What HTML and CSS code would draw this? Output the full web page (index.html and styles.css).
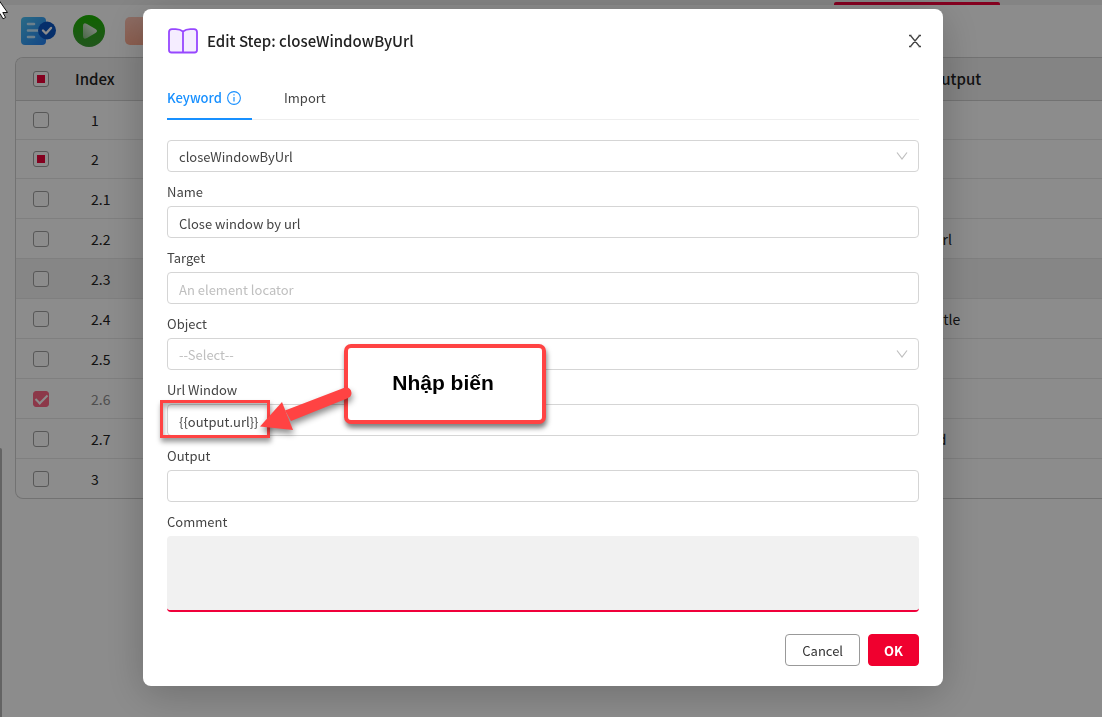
FILE: index.html
```html
<!DOCTYPE html>
<html lang="en">
<head>
<meta charset="utf-8">
<title>Edit Step</title>
<link rel="stylesheet" href="styles.css">
</head>
<body>
<div class="app">
  <div class="tabstrip"><span class="tabstrip-active"></span></div>
  <main class="page">
    <div class="toolbar">
      <button class="tool" type="button" aria-label="Test cases">
        <svg width="36" height="30" viewBox="0 0 36 30"><defs><linearGradient id="doc" x1="0" y1="0" x2="1" y2="1"><stop offset="0" stop-color="#4cc3f5"/><stop offset="1" stop-color="#2380f5"/></linearGradient></defs><rect x="1" y="1" width="25" height="28" rx="4" fill="url(#doc)"/><path d="M8 8h6M8 14.500h10M8 21h6" stroke="#c5eaff" stroke-width="2.600" stroke-linecap="round"/><circle cx="27" cy="14.500" r="9" fill="#0b56c4"/><path d="M23 14.500l3 3 5-5.500" fill="none" stroke="#fff" stroke-width="2.400" stroke-linecap="round" stroke-linejoin="round"/></svg>
      </button>
      <button class="tool" type="button" aria-label="Run">
        <svg width="32" height="32" viewBox="0 0 32 32"><defs><linearGradient id="run" x1="0" y1="0" x2="0" y2="1"><stop offset="0" stop-color="#1cb400"/><stop offset="1" stop-color="#3d9c35"/></linearGradient><linearGradient id="play" x1="0" y1="1" x2="1" y2="0"><stop offset="0" stop-color="#86bd80"/><stop offset="1" stop-color="#fff"/></linearGradient></defs><circle cx="16" cy="16" r="16" fill="url(#run)"/><path d="M10 11q0-4 4-2l8.500 5q3 2 0 4L14 23q-4 2-4-2z" fill="url(#play)"/></svg>
      </button>
      <button class="tool" type="button" aria-label="Stop">
        <svg width="28" height="28" viewBox="0 0 28 28"><defs><linearGradient id="stop" x1="0" y1="0" x2="0" y2="1"><stop offset="0" stop-color="#ffc4b4"/><stop offset="1" stop-color="#ffac91"/></linearGradient></defs><rect width="28" height="28" rx="5" fill="url(#stop)"/></svg>
      </button>
    </div>
    <div class="table-wrap">
      <table class="steps">
        <thead><tr><th class="col-check"><input type="checkbox" class="box partial" aria-label="Select all"></th><th class="col-index">Index</th><th></th><th class="col-out">Output</th></tr></thead>
        <tbody>
          <tr><td class="col-check"><input type="checkbox" class="box" aria-label="Step 1"></td><td>1</td><td></td><td></td></tr>
          <tr><td class="col-check"><input type="checkbox" class="box partial" aria-label="Step 2"></td><td>2</td><td></td><td></td></tr>
          <tr class="sub"><td class="col-check"><input type="checkbox" class="box" aria-label="Step 2.1"></td><td>2.1</td><td></td><td></td></tr>
          <tr class="sub"><td class="col-check"><input type="checkbox" class="box" aria-label="Step 2.2"></td><td>2.2</td><td></td><td>url</td></tr>
          <tr class="sub hover"><td class="col-check"><input type="checkbox" class="box" aria-label="Step 2.3"></td><td>2.3</td><td></td><td></td></tr>
          <tr class="sub"><td class="col-check"><input type="checkbox" class="box" aria-label="Step 2.4"></td><td>2.4</td><td></td><td>title</td></tr>
          <tr class="sub"><td class="col-check"><input type="checkbox" class="box" aria-label="Step 2.5"></td><td>2.5</td><td></td><td></td></tr>
          <tr class="sub faded"><td class="col-check"><input type="checkbox" class="box" checked aria-label="Step 2.6"></td><td>2.6</td><td></td><td></td></tr>
          <tr class="sub"><td class="col-check"><input type="checkbox" class="box" aria-label="Step 2.7"></td><td>2.7</td><td></td><td>id</td></tr>
          <tr><td class="col-check"><input type="checkbox" class="box" aria-label="Step 3"></td><td>3</td><td></td><td></td></tr>
        </tbody>
      </table>
    </div>
  </main>
  <span class="scroll-thumb"></span>
</div>

<div class="overlay">
  <form class="modal" role="dialog" aria-labelledby="modal-title">
    <header class="modal-head">
      <svg width="32" height="28" viewBox="0 0 32 28"><path d="M16 4.500Q13 2 8 2.200H5Q2 2.200 2 5v18q0 2.500 2.500 2.500h23Q30 25.500 30 23V5q0-2.800-3-2.800h-3Q19 2 16 4.500zM16 4.500v21" fill="#f5edff" stroke="#9747ff" stroke-width="1.800" stroke-linejoin="round"/></svg>
      <h1 id="modal-title" class="modal-title">Edit Step: closeWindowByUrl</h1>
      <button class="close" type="button" aria-label="Close"><svg width="14" height="14" viewBox="0 0 14 14"><path d="M2.500 1.500l9 11M11.500 1.500l-9 11M1 1.500h2.500M10.500 1.500H13M1 12.500h2.500M10.500 12.500H13" fill="none" stroke="#444" stroke-width="1.300"/></svg></button>
    </header>
    <nav class="tabs">
      <button class="tab active" type="button">Keyword <svg width="14" height="14" viewBox="0 0 14 14" fill="none" stroke="#1890ff"><circle cx="7" cy="7" r="6.400" stroke-width="1.100"/><path d="M7 6v4.500M7 3.300v1.300" stroke-width="1.200"/></svg></button>
      <button class="tab" type="button">Import</button>
    </nav>
    <div class="select-wrap">
      <select class="field" aria-label="Keyword"><option>closeWindowByUrl</option></select>
      <svg class="chevron" width="12" height="10" viewBox="0 0 12 10"><path d="M1 1.500l5 6.500 5-6.500" fill="none" stroke="#bfbfbf" stroke-width="1.200"/></svg>
    </div>
    <label class="label" for="name">Name</label>
    <input class="field" id="name" type="text" value="Close window by url">
    <label class="label" for="target">Target</label>
    <input class="field" id="target" type="text" placeholder="An element locator">
    <label class="label" for="object">Object</label>
    <div class="select-wrap">
      <select class="field empty" id="object"><option>--Select--</option></select>
      <svg class="chevron" width="12" height="10" viewBox="0 0 12 10"><path d="M1 1.500l5 6.500 5-6.500" fill="none" stroke="#bfbfbf" stroke-width="1.200"/></svg>
    </div>
    <label class="label" for="url">Url Window</label>
    <input class="field" id="url" type="text" value="{{output.url}}">
    <label class="label" for="output">Output</label>
    <input class="field" id="output" type="text">
    <label class="label" for="comment">Comment</label>
    <textarea class="comment" id="comment"></textarea>
    <footer class="actions">
      <button class="btn" type="button">Cancel</button>
      <button class="btn primary" type="submit">OK</button>
    </footer>
    <div class="mark"></div>
    <div class="callout">Nhập biến</div>
    <svg class="arrow" width="100" height="60" viewBox="0 0 100 60"><path d="M88 8.500Q94 8 94.500 14Q94.500 18 90 19.500L34 42L28 31.500z" fill="#ff4343"/><path d="M3 47.500L25 23L36 51z" fill="#ff4343"/></svg>
  </form>
</div>

<svg class="cursor" width="10" height="20" viewBox="0 0 10 20"><path d="M-4-4L7.500 12.500H2.800L5.600 17.500L3 18.800L0 13.500L-4 17z" fill="#fff" stroke="#111"/></svg>
</body>
</html>
```
FILE: styles.css
```css
* { box-sizing: border-box; }
body {
  margin: 0;
  background: #fff;
  color: #222;
  font: 14px/22px "Noto Sans CJK JP", "Noto Sans", sans-serif;
  overflow: hidden;
}
button, input, select, textarea { font: inherit; color: inherit; margin: 0; }
.app { position: relative; min-height: 100vh; }
.tabstrip { display: flex; justify-content: flex-end; align-items: flex-end; height: 5px; padding-right: 102px; background: #f0f0f0; }
.tabstrip-active { width: 166px; height: 3px; background: #f0003a; border-radius: 2px 2px 0 0; }
.page { padding: 10px 0 0 15px; }
.toolbar { display: flex; align-items: center; gap: 17px; height: 32px; padding-left: 5px; margin-bottom: 10px; }
.tool { display: flex; padding: 0; border: 0; background: none; }
.tool:last-child { margin-left: 3px; }
.table-wrap { border: 1px solid #d0d0d0; border-right: 0; border-radius: 8px 0 0 8px; overflow: hidden; }
.steps { width: 100%; border-collapse: separate; border-spacing: 0; table-layout: fixed; }
.steps th { height: 43px; padding: 0 0 0 9px; background: #f0f0f0; border-bottom: 1px solid #d0d0d0; text-align: left; font-size: 15px; font-weight: 500; }
.steps td { height: 39px; padding: 0 0 0 25px; border-bottom: 1px solid #e8e8e8; }
.steps .sub td { height: 40px; }
.steps tr:last-child td { border-bottom: 0; }
.steps .hover td { background: #f5f5f5; }
.steps .faded td { color: #909090; }
.steps .col-check { width: 50px; padding: 0; text-align: center; }
.steps .col-index { width: 120px; }
.steps .col-out { width: 172px; padding-left: 0; }
.steps td:last-child { padding-left: 4px; }
.box { appearance: none; display: grid; place-items: center; width: 16px; height: 16px; margin: 0 auto; border: 1px solid #a0a0a0; border-radius: 3px; background: #fff; }
.box.partial::after { content: ""; width: 8px; height: 8px; background: #f0003a; }
.box:checked { background: #ff6685; border-color: #ff6685; }
.box:checked::after { content: ""; width: 5px; height: 10px; border: solid #fff; border-width: 0 2px 2px 0; transform: translateY(-1px) rotate(45deg); }
.scroll-thumb { position: absolute; left: 0; top: 448px; bottom: 0; width: 2px; background: #b5b5b5; border-radius: 0 2px 0 0; }

.overlay { position: fixed; inset: 0; display: flex; justify-content: center; align-items: flex-start; padding: 9px 16px 0 0; background: rgba(0, 0, 0, .45); }
.modal { position: relative; width: 100%; max-width: 800px; padding: 17px 24px 20px; background: #fff; border-radius: 8px; box-shadow: 0 8px 40px rgba(0, 0, 0, .22); color: #444; font-size: 13px; }
.modal-head { display: flex; align-items: center; gap: 8px; height: 30px; margin-bottom: 22px; }
.modal-title { flex: 1; margin: 0; color: #222; font-size: 15px; line-height: 24px; font-weight: 500; }
.close { display: flex; padding: 0; margin-right: -3px; border: 0; background: none; }
.tabs { display: flex; gap: 32px; height: 42px; margin-bottom: 20px; box-shadow: inset 0 -1px #eee; }
.tab { display: flex; align-items: center; gap: 5px; padding: 0; border: 0; border-bottom: 2px solid transparent; background: none; }
.tab.active { padding-right: 11px; color: #1890ff; border-color: #1890ff; font-weight: 500; }
.label { display: block; height: 34px; line-height: 40px; }
.field { display: block; width: 100%; height: 32px; padding: 2px 11px 0; border: 1px solid #d5d5d5; border-radius: 4px; background: #fff; appearance: none; outline: 0; }
.field::placeholder, .field.empty { color: #bfbfbf; opacity: 1; }
.select-wrap { display: grid; align-items: center; }
.select-wrap > * { grid-area: 1 / 1; }
.chevron { justify-self: end; margin-right: 11px; pointer-events: none; }
.comment { display: block; width: 100%; height: 76px; border: 0; border-bottom: 2px solid #f0003a; border-radius: 4px; background: #f1f1f1; resize: none; outline: 0; }
.actions { display: flex; justify-content: flex-end; gap: 8px; margin-top: 22px; }
.btn { height: 32px; padding: 1px 16px 0; border: 1px solid #999; border-radius: 4px; background: #fff; color: #333; }
.btn.primary { padding: 1px 15px 0; border-color: #f0002f; background: #f0002f; color: #fff; font-weight: 700; }
.mark { position: absolute; left: 17px; top: 391px; width: 110px; height: 38px; border: 3px solid #ff4343; box-shadow: 1px 4px 5px rgba(0, 0, 0, .4), inset 1px 4px 5px rgba(0, 0, 0, .3); }
.callout { position: absolute; left: 201px; top: 335px; display: grid; place-items: center; width: 202px; height: 80px; padding: 0 4px 2px 0; border: 4px solid #ff4343; border-radius: 7px; background: #fff; box-shadow: 1px 4px 5px rgba(0, 0, 0, .5); color: #000; font: bold 21px/24px "Liberation Sans", sans-serif; }
.arrow { position: absolute; left: 114px; top: 370px; filter: drop-shadow(1px 4px 3px rgba(0, 0, 0, .45)); }
.cursor { position: absolute; left: 0; top: 0; }
```
